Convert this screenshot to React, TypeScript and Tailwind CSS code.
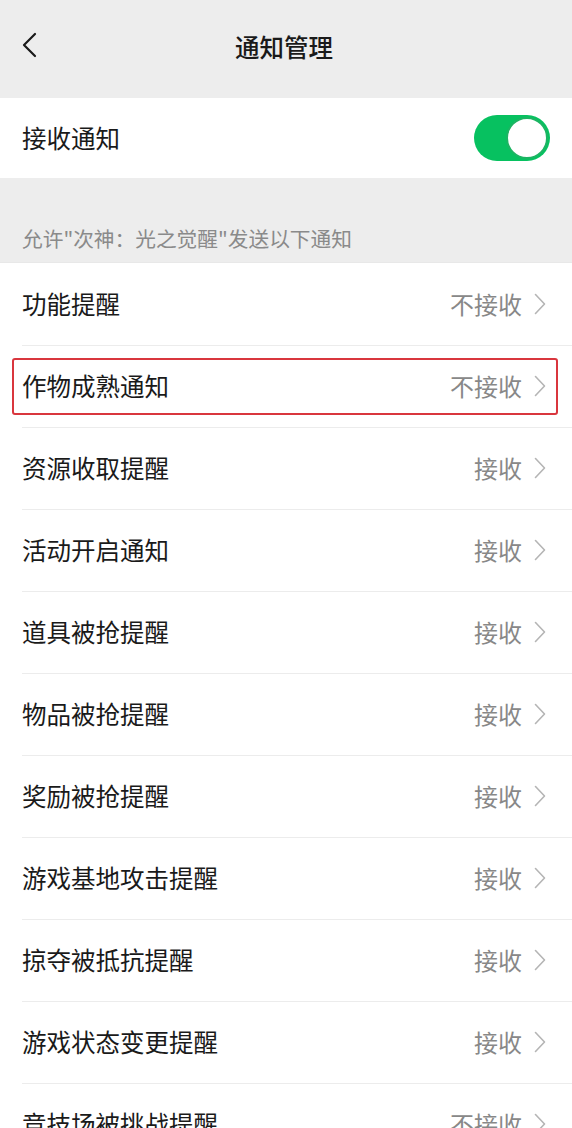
import React from "react";

const items: { label: string; value: string; highlight?: boolean }[] = [
  { label: "功能提醒", value: "不接收" },
  { label: "作物成熟通知", value: "不接收", highlight: true },
  { label: "资源收取提醒", value: "接收" },
  { label: "活动开启通知", value: "接收" },
  { label: "道具被抢提醒", value: "接收" },
  { label: "物品被抢提醒", value: "接收" },
  { label: "奖励被抢提醒", value: "接收" },
  { label: "游戏基地攻击提醒", value: "接收" },
  { label: "掠夺被抵抗提醒", value: "接收" },
  { label: "游戏状态变更提醒", value: "接收" },
  { label: "竞技场被挑战提醒", value: "不接收" },
];

function Chevron() {
  return (
    <svg width="12" height="22" viewBox="0 0 12 22" className="ml-[12px] shrink-0">
      <path d="M1.5 1.5 L10.5 11 L1.5 20.5" fill="none" stroke="#b5b5b5" strokeWidth="1.6" strokeLinecap="round" strokeLinejoin="round" />
    </svg>
  );
}

export default function App() {
  return (
    <div
      className="w-[572px] h-[1128px] overflow-hidden bg-[#ededed]"
      style={{ fontFamily: '"Noto Sans CJK SC", "Noto Sans", sans-serif' }}
    >
      {/* Header */}
      <div className="relative h-[98px] flex items-center justify-center">
        <svg width="16" height="26" viewBox="0 0 16 26" className="absolute left-[21px] top-[32px]">
          <path d="M14 2 L3 13 L14 24" fill="none" stroke="#1a1a1a" strokeWidth="2.2" strokeLinecap="round" strokeLinejoin="round" />
        </svg>
        <div className="text-[24.5px] font-medium text-[#1a1a1a] leading-none -mt-[4px] -ml-[4px]">通知管理</div>
      </div>

      {/* Toggle row */}
      <div className="h-[80px] bg-white flex items-center justify-between pl-[22px] pr-[22px]">
        <div className="text-[24.5px] text-[#1a1a1a] leading-none">接收通知</div>
        <div className="w-[76px] h-[46px] rounded-full bg-[#07c160] relative">
          <div className="absolute right-[2px] top-[2px] w-[42px] h-[42px] rounded-full bg-white border-2 border-[#1db463]" />
        </div>
      </div>

      {/* Caption */}
      <div className="h-[84px] flex items-end pl-[22px] pb-[13px]">
        <div className="text-[20.7px] text-[#8a8a8a] leading-none">允许"次神：光之觉醒"发送以下通知</div>
      </div>

      {/* List */}
      <div className="bg-white border-t border-[#e8e8e8]">
        {items.map((it, i) => (
          <div key={i} className="relative h-[82px] flex items-center pl-[22px] pr-[26px]">
            {i > 0 && <div className="absolute left-[22px] right-0 top-0 h-px bg-[#ececec]" />}
            {it.highlight && (
              <div className="absolute left-[12px] right-[14px] top-[13px] bottom-[12px] border-2 border-[#d9363e] rounded-[3px]" />
            )}
            <div className="flex-1 text-[24.5px] text-[#1a1a1a] leading-none">{it.label}</div>
            <div className="text-[24px] text-[#888888] leading-none">{it.value}</div>
            <Chevron />
          </div>
        ))}
      </div>
    </div>
  );
}
